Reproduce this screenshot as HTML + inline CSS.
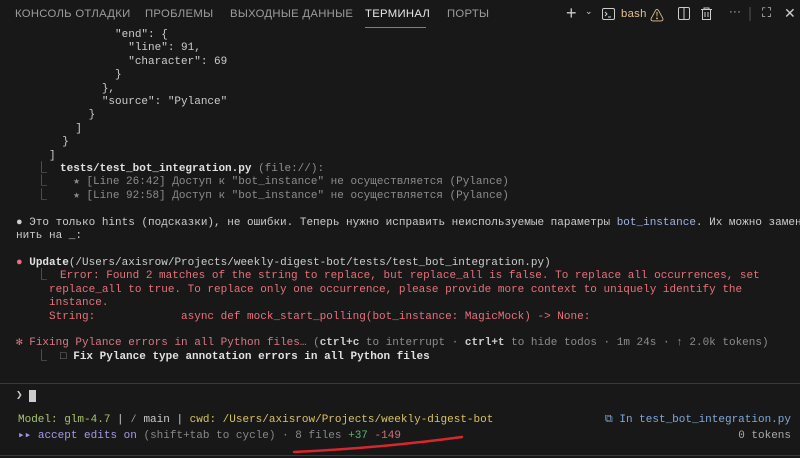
<!DOCTYPE html>
<html><head><meta charset="utf-8"><style>
*{margin:0;padding:0;box-sizing:border-box}
body{width:800px;height:458px;background:#181818;overflow:hidden;position:relative;font-family:"Liberation Sans","Noto Sans CJK SC",sans-serif}
.tabs{position:absolute;top:0;left:0;width:800px;height:28px;font-size:11.3px;color:#9d9d9d}
.tabs span{position:absolute;top:8px;white-space:nowrap;letter-spacing:0.3px}
.act{color:#e7e7e7}
.ul{position:absolute;left:365px;top:27px;width:61px;height:1px;background:#3b8eea}
pre{position:absolute;left:16px;top:29px;font-family:"Liberation Mono","DejaVu Sans Mono",monospace;font-size:11px;line-height:13.4px;color:#cccccc;white-space:pre;width:784px;overflow:hidden}
.g{color:#8c8c8c}.b{font-weight:bold;color:#e0e0e0}.r{color:#e8707a}.p{color:#d87884}.bl{color:#9fb2e0}.dot{color:#e86f86}
.sep{position:absolute;left:0;width:800px;height:1px;background:#3a3a3a}
.st{position:absolute;font-family:"Liberation Mono","DejaVu Sans Mono",monospace;font-size:11px;white-space:pre;line-height:13px}
</style></head><body>
<div class="tabs">
<span style="left:15px">КОНСОЛЬ ОТЛАДКИ</span>
<span style="left:145px">ПРОБЛЕМЫ</span>
<span style="left:230px">ВЫХОДНЫЕ ДАННЫЕ</span>
<span class="act" style="left:365px">ТЕРМИНАЛ</span>
<span style="left:447px">ПОРТЫ</span>
<span style="left:566px;top:3px;font-size:18px;color:#ccc">+</span>
<span style="left:585px;top:6px;font-size:9px;color:#ccc">⌄</span>
<span style="left:621px;color:#e2c08d">bash</span>
<span style="left:650px;top:6px;color:#e2c08d;font-size:14px">⚠</span>
<span style="left:762px;top:5px;color:#ccc;font-size:13px">⛶</span>
<span style="left:784px;top:5px;color:#ccc;font-size:14px">✕</span>
<span style="left:729px;top:6px;color:#ccc">···</span>
</div>
<svg style="position:absolute;left:0;top:0" width="800" height="28">
<rect x="602.5" y="8.5" width="12" height="11" rx="1.5" fill="none" stroke="#ccc"/>
<path d="M605 12l2 2-2 2M608 17h3" stroke="#ccc" fill="none"/>
<rect x="678.5" y="7.5" width="11" height="12" rx="1.5" fill="none" stroke="#ccc"/>
<path d="M684 8v11" stroke="#ccc"/>
<path d="M701 9.5h11M704 9.5v-1.5h5v1.5M702.5 9.5v10h8v-10M705 12v5M708 12v5" stroke="#ccc" fill="none"/>
<path d="M750 7v14" stroke="#555"/>
</svg>
<div class="ul"></div>
<pre>               "end": {
                 "line": 91,
                 "character": 69
               }
             },
             "source": "Pylance"
           }
         ]
       }
     ]
   <span class="g">⎿</span>  <span class="b">tests/test_bot_integration.py</span> <span class="g">(file://):</span>
   <span class="g">⎿    ★ [Line 26:42] Доступ к "bot_instance" не осуществляется (Pylance)</span>
   <span class="g">⎿    ★ [Line 92:58] Доступ к "bot_instance" не осуществляется (Pylance)</span>

● Это только hints (подсказки), не ошибки. Теперь нужно исправить неиспользуемые параметры <span class="bl">bot_instance</span>. Их можно заменить
нить на _:

<span class="dot">●</span> <span class="b">Update</span>(/Users/axisrow/Projects/weekly-digest-bot/tests/test_bot_integration.py)
   <span class="g">⎿</span>  <span class="r">Error: Found 2 matches of the string to replace, but replace_all is false. To replace all occurrences, set</span>
<span class="r">     replace_all to true. To replace only one occurrence, please provide more context to uniquely identify the</span>
<span class="r">     instance.</span>
<span class="r">     String:             async def mock_start_polling(bot_instance: MagicMock) -&gt; None:</span>

<span class="p">✻ Fixing Pylance errors in all Python files…</span> <span class="g">(</span><b style="color:#ccc">ctrl+c</b><span class="g"> to interrupt · </span><b style="color:#ccc">ctrl+t</b><span class="g"> to hide todos · 1m 24s · ↑ 2.0k tokens)</span>
   <span class="g">⎿</span>  <span class="g">□</span> <span class="b">Fix Pylance type annotation errors in all Python files</span></pre>
<div class="sep" style="top:383px"></div>
<div class="st" style="left:16px;top:390px;color:#ccc">❯ <span style="background:#ccc"> </span></div>
<div class="sep" style="top:455px"></div>
<div class="st" style="left:18px;top:414px;color:#a8c46a">Model: glm-4.7 <span style="color:#ccc">|</span> <span style="color:#ccc">⁄ main |</span> <span style="color:#d8c35a">cwd: /Users/axisrow/Projects/weekly-digest-bot</span></div>
<div class="st" style="left:18px;top:430px;color:#888"><span style="color:#a39ae6">▸▸ accept edits on</span> (shift+tab to cycle) · 8 files <span style="color:#5fb36a">+37</span> <span style="color:#d0707a">-149</span></div>
<div class="st" style="right:9px;top:414px;color:#7fa8d8;text-align:right">⧉ In test_bot_integration.py</div>
<div class="st" style="right:9px;top:430px;color:#aaa;text-align:right">0 tokens</div>
<svg style="position:absolute;left:0;top:0" width="800" height="458"><path d="M294 452 Q380 448 462 437" stroke="#d8262e" stroke-width="2.5" fill="none" stroke-linecap="round"/></svg>
</body></html>
